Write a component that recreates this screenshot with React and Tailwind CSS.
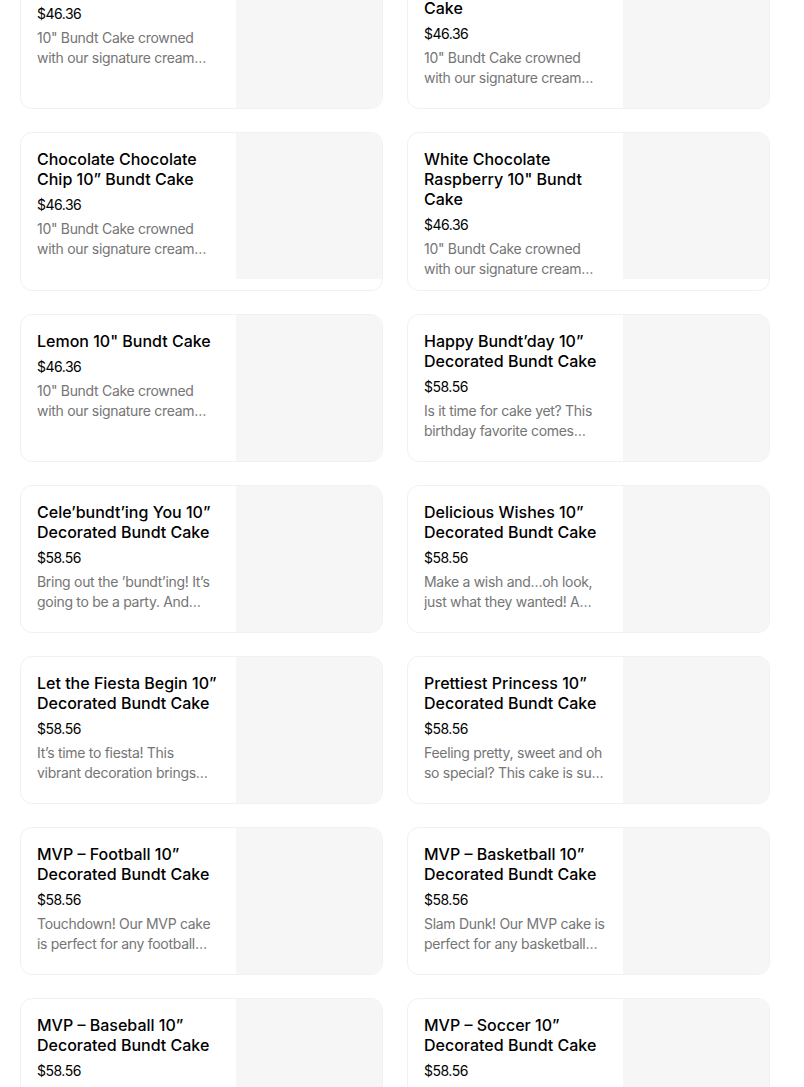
import React from 'react';

const cakeDesc = '10" Bundt Cake crowned with our signature cream cheese frosting and finished with delightful decorations.';

const items = [
  { name: 'Carrot 10" Bundt Cake', price: '$46.36', desc: cakeDesc },
  { name: 'Chocolate 10" Bundt Cake', price: '$46.36', desc: cakeDesc },
  { name: 'Chocolate Chocolate Chip 10” Bundt Cake', price: '$46.36', desc: cakeDesc },
  { name: 'White Chocolate Raspberry 10" Bundt Cake', price: '$46.36', desc: cakeDesc },
  { name: 'Lemon 10" Bundt Cake', price: '$46.36', desc: cakeDesc },
  { name: 'Happy Bundt’day 10” Decorated Bundt Cake', price: '$58.56', desc: 'Is it time for cake yet? This birthday favorite comes topped with colorful sprinkles and candles.' },
  { name: 'Cele’bundt’ing You 10” Decorated Bundt Cake', price: '$58.56', desc: 'Bring out the ’bundt’ing! It’s going to be a party. And what better way to celebrate.' },
  { name: 'Delicious Wishes 10” Decorated Bundt Cake', price: '$58.56', desc: 'Make a wish and…oh look, just what they wanted! A cake that makes every wish come true.' },
  { name: 'Let the Fiesta Begin 10” Decorated Bundt Cake', price: '$58.56', desc: 'It’s time to fiesta! This vibrant decoration brings everyone together to celebrate.' },
  { name: 'Prettiest Princess 10” Decorated Bundt Cake', price: '$58.56', desc: 'Feeling pretty, sweet and oh so special? This cake is sure to make anyone feel royal.' },
  { name: 'MVP – Football 10” Decorated Bundt Cake', price: '$58.56', desc: 'Touchdown! Our MVP cake is perfect for any football fan. Celebrate the big game.' },
  { name: 'MVP – Basketball 10” Decorated Bundt Cake', price: '$58.56', desc: 'Slam Dunk! Our MVP cake is perfect for any basketball fan. Celebrate the big game.' },
  { name: 'MVP – Baseball 10” Decorated Bundt Cake', price: '$58.56', desc: 'Home run! Our MVP cake is perfect for any baseball fan. Celebrate the big game.' },
  { name: 'MVP – Soccer 10” Decorated Bundt Cake', price: '$58.56', desc: 'Goal! Our MVP cake is perfect for any soccer fan. Celebrate the big game.' },
];

function ItemCard({ item }) {
  return (
    <div className="flex bg-white border border-[#f1f1f1] rounded-xl overflow-hidden">
      <div className="flex-1 min-w-0 pt-4 pl-4 pr-4 pb-[11px]">
        <h3 className="text-base font-medium leading-5 text-black">{item.name}</h3>
        <p className="mt-[6px] text-sm leading-5 text-black tracking-[-0.5px]">{item.price}</p>
        <p className="mt-1 text-sm leading-5 text-[#757575] tracking-[-0.3px] line-clamp-2">{item.desc}</p>
      </div>
      <div className="w-[146px] h-[146px] shrink-0 bg-[#f6f6f6]" />
    </div>
  );
}

export default function App() {
  return (
    <div className="h-screen overflow-hidden bg-white" style={{ fontFamily: 'Inter, "Noto Sans", sans-serif' }}>
      <div className="pl-5 w-[770px] -mt-[39px]">
        <div className="grid grid-cols-2 gap-x-6 gap-y-[23px]">
          {items.map(item => (
            <ItemCard key={item.name} item={item} />
          ))}
        </div>
      </div>
    </div>
  );
}
